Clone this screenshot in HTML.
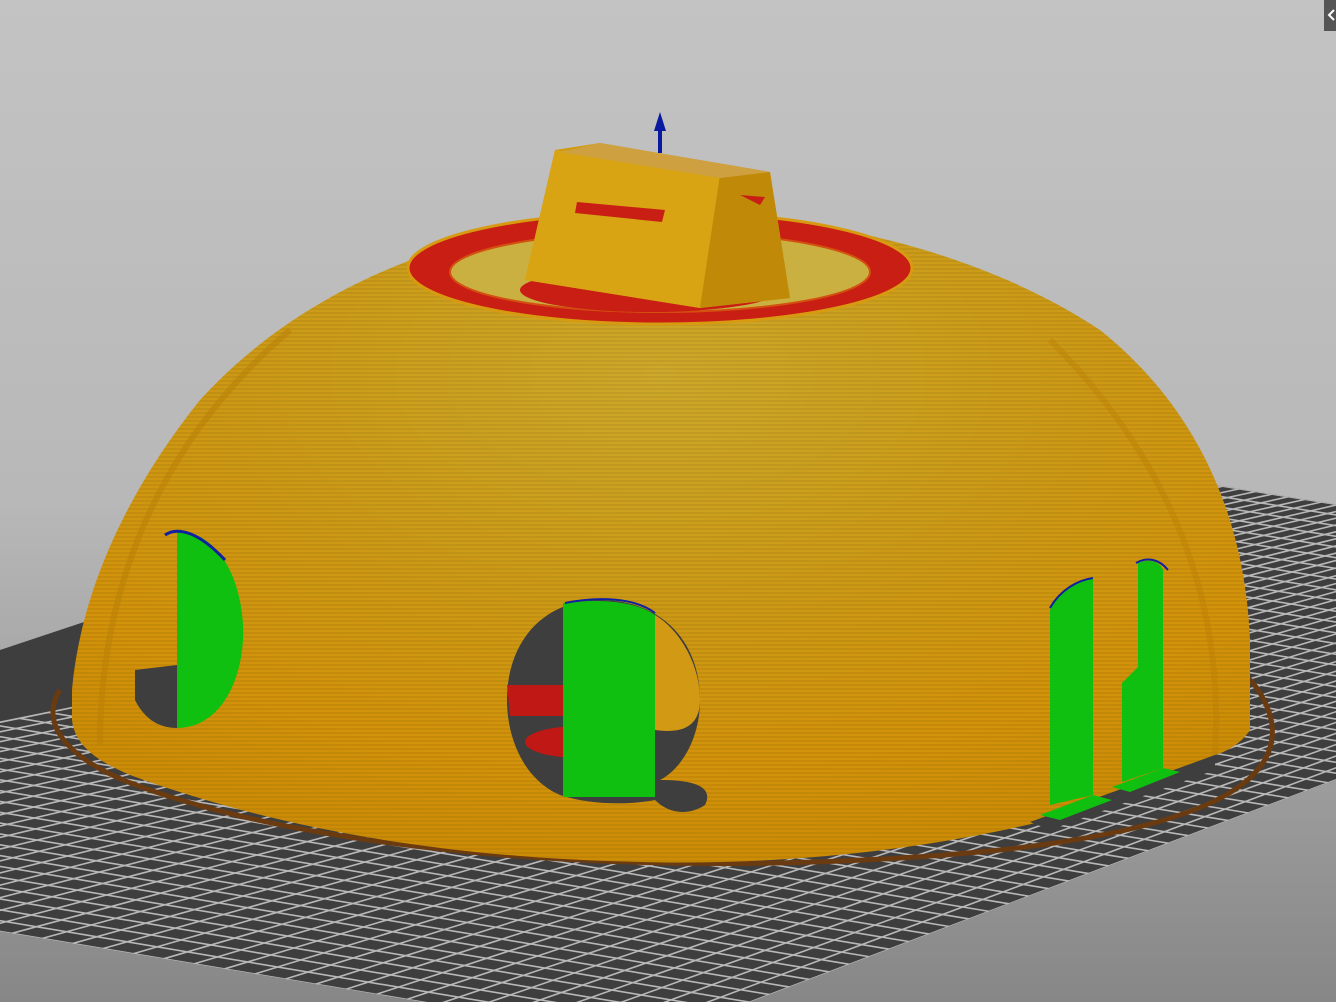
<!DOCTYPE html>
<html><head><meta charset="utf-8"><style>
html,body{margin:0;padding:0;width:1336px;height:1002px;overflow:hidden;}
svg{display:block}
</style></head><body>
<svg id="s" width="1336" height="1002" viewBox="0 0 1336 1002" xmlns="http://www.w3.org/2000/svg">
<defs>
<linearGradient id="bg" x1="0" y1="0" x2="0" y2="1">
<stop offset="0" stop-color="#c3c3c3"/><stop offset="0.5" stop-color="#b8b8b8"/><stop offset="1" stop-color="#878787"/>
</linearGradient>
<radialGradient id="dome" cx="0.5" cy="0.25" r="0.75">
<stop offset="0" stop-color="#cda82a"/><stop offset="0.45" stop-color="#cc9a16"/><stop offset="0.8" stop-color="#d2920a"/><stop offset="1" stop-color="#cc8c06"/>
</radialGradient>
<clipPath id="plateclip"><polygon points="-566,837 0,650 75,625 400,518 1190,481 1847,586 650,1040"/></clipPath>
<pattern id="stripe" width="4" height="4" patternUnits="userSpaceOnUse"><rect width="4" height="2" fill="#000" opacity="0.06"/></pattern>
</defs>
<rect width="1336" height="1002" fill="url(#bg)"/>
<polygon points="-566,837 0,650 75,625 400,518 1190,481 1847,586 650,1040" fill="#3e3e3e"/>
<g id="grid" clip-path="url(#plateclip)"></g>
<path d="M60,690 C40,720 60,760 150,790 C350,860 700,880 1000,850 C1180,830 1290,790 1270,715 C1262,690 1250,680 1245,675" fill="none" stroke="#6a3a10" stroke-width="5"/>
<path d="M72,720 L72,690 C80,600 120,500 200,400 C300,290 450,228 620,214 C800,205 980,250 1100,330 C1200,410 1245,520 1250,640 L1250,730 C1240,745 1225,752 1215,755 L1040,822 C900,855 760,865 640,862 C450,858 280,830 130,775 C95,760 75,745 72,720 Z" fill="url(#dome)"/>
<path d="M72,720 L72,690 C80,600 120,500 200,400 C300,290 450,228 620,214 C800,205 980,250 1100,330 C1200,410 1245,520 1250,640 L1250,730 C1240,745 1225,752 1215,755 L1040,822 C900,855 760,865 640,862 C450,858 280,830 130,775 C95,760 75,745 72,720 Z" fill="url(#stripe)"/>
<path d="M100,745 C100,600 150,450 290,330" fill="none" stroke="#b87e05" stroke-width="6" opacity="0.5"/>
<path d="M1215,755 C1225,600 1170,460 1050,340" fill="none" stroke="#b87e05" stroke-width="6" opacity="0.4"/>
<path d="M1030,822 L1215,755 L1215,770 L1050,830 Z" fill="#3e3e3e"/>
<ellipse cx="660" cy="268" rx="252" ry="56" fill="#c81e14"/>
<ellipse cx="660" cy="268" rx="252" ry="56" fill="none" stroke="#d89a10" stroke-width="3"/>
<ellipse cx="660" cy="272" rx="210" ry="40" fill="#c9b040"/>
<ellipse cx="660" cy="272" rx="210" ry="40" fill="none" stroke="#d45010" stroke-width="2"/>
<ellipse cx="650" cy="290" rx="130" ry="22" fill="#c81e14"/>
<polygon points="555,150 600,143 770,172 790,298 700,308 525,280" fill="#d09a0a"/>
<polygon points="555,150 720,175 700,308 525,280" fill="#d8a414"/>
<polygon points="720,175 770,172 790,298 700,308" fill="#c08a08"/>
<polygon points="600,143 770,172 720,178 560,152" fill="#cfa040"/>
<polygon points="577,202 665,210 662,222 575,213" fill="#c81e14"/>
<polygon points="740,195 765,197 760,205" fill="#c81e14"/>
<rect x="658" y="128" width="4" height="25" fill="#0a1aa0"/>
<polygon points="654,131 660,112 666,131" fill="#0a1aa0"/>
<path d="M177,530 C230,535 245,600 243,640 C240,690 215,728 177,728 Z" fill="#10c010"/>
<path d="M135,670 L177,665 L177,728 C160,728 145,720 135,700 Z" fill="#3e3e3e"/>
<path d="M165,535 C175,528 195,528 225,560" fill="none" stroke="#1020a0" stroke-width="3"/>
<path d="M600,600 C660,600 700,640 700,700 C700,740 680,770 660,780 C690,780 715,785 705,805 C690,815 670,815 655,800 C630,805 590,805 560,795 C525,780 507,740 507,700 C507,640 545,600 600,600 Z" fill="#3e3e3e"/>
<path d="M507,685 L563,685 L563,716 L510,716 Z" fill="#c01814"/>
<ellipse cx="580" cy="742" rx="55" ry="16" fill="#c01814"/>
<path d="M563,603 C590,600 630,598 655,615 L655,797 L563,797 Z" fill="#10c010"/>
<path d="M655,615 C680,630 700,665 700,700 C700,720 690,735 655,730 Z" fill="#d29a14"/>
<path d="M565,603 C600,596 635,598 655,613" fill="none" stroke="#1020a0" stroke-width="2"/>
<path d="M1050,610 C1060,590 1080,580 1093,578 L1093,795 L1050,805 Z" fill="#10c010"/>
<polygon points="1040,815 1093,795 1112,800 1060,820" fill="#10c010"/>
<path d="M1138,563 C1150,558 1160,562 1163,570 L1163,768 L1122,782 L1122,683 L1138,667 Z" fill="#10c010"/>
<polygon points="1112,787 1163,768 1180,772 1130,792" fill="#10c010"/>
<path d="M1050,608 C1060,590 1078,580 1093,578" fill="none" stroke="#1020a0" stroke-width="2"/>
<path d="M1136,563 C1148,556 1160,560 1168,570" fill="none" stroke="#1020a0" stroke-width="2"/>
<rect x="1324" y="0" width="12" height="31" fill="#555"/>
<path d="M1334,10 L1329,15 L1334,20" fill="none" stroke="#fff" stroke-width="2"/>
</svg>
<script>
(function(){
var L=[-566,837],B=[1190,481],R=[1847,586],F=[650,1040];
function m(u,v){var x=(1-u)*(1-v)*L[0]+u*(1-v)*B[0]+u*v*R[0]+(1-u)*v*F[0];
var y=(1-u)*(1-v)*L[1]+u*(1-v)*B[1]+u*v*R[1]+(1-u)*v*F[1];return [x,y];}
var g=document.getElementById('grid'),ns='http://www.w3.org/2000/svg',N=60,M=40;
function line(a,b,c,w){var l=document.createElementNS(ns,'line');l.setAttribute('x1',a[0]);l.setAttribute('y1',a[1]);l.setAttribute('x2',b[0]);l.setAttribute('y2',b[1]);l.setAttribute('stroke',c);l.setAttribute('stroke-width',w);g.appendChild(l);}
for(var i=0;i<=N;i++){line(m(i/N,0),m(i/N,1),'#b8b8b8',1.6);}
for(var j=0;j<=M;j++){line(m(0,j/M),m(1,j/M),'#b8b8b8',1.6);}
})();
</script>
</body></html>
